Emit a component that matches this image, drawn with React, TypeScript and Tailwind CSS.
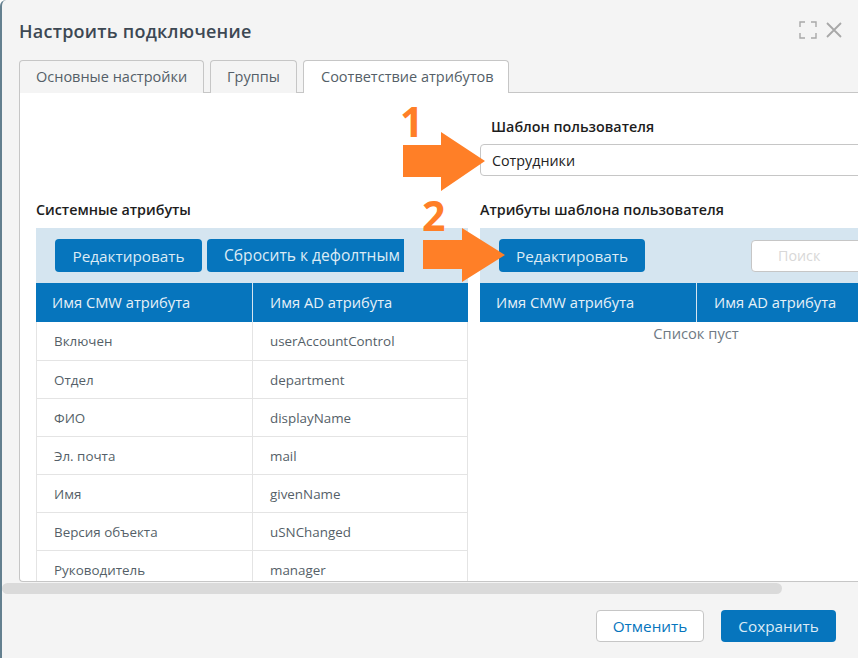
const rows = [
  ["Включен", "userAccountControl"],
  ["Отдел", "department"],
  ["ФИО", "displayName"],
  ["Эл. почта", "mail"],
  ["Имя", "givenName"],
  ["Версия объекта", "uSNChanged"],
  ["Руководитель", "manager"],
];

function HeaderRow() {
  return (
    <div className="flex h-[39px] bg-[#0675bd] text-[14.7px] text-[#e6f1f8]">
      <div className="w-[217px] border-r border-[#d5e5f0] pl-[16px] flex items-center pb-[1px]">Имя CMW атрибута</div>
      <div className="flex-1 pl-[17px] flex items-center pb-[1px]">Имя AD атрибута</div>
    </div>
  );
}

function Btn({ children, className }: { children: React.ReactNode; className: string }) {
  return (
    <div className={"h-[33px] bg-[#0675bd] text-[#dcebf5] text-[15.3px] pt-[1px] flex items-center shrink-0 overflow-hidden whitespace-nowrap " + className}>
      {children}
    </div>
  );
}

export default function App() {
  return (
    <div
      className="relative w-[858px] h-[658px] overflow-hidden bg-[#f4f4f4] border-l-2 border-[#64808f] rounded-tl-[6px] flex flex-col"
      style={{ fontFamily: '"Open Sans", "Noto Sans", sans-serif' }}
    >
      <div className="flex items-center justify-between h-[60px] pl-[17px] pr-[16px]">
        <div className="text-[18px] font-semibold text-[#3d4853] tracking-[0.25px] pt-[2px]">Настроить подключение</div>
        <div className="flex items-center gap-[9px] text-[#a8a8a8]">
          <svg width="18" height="18" viewBox="0 0 18 18" fill="none" stroke="currentColor" strokeWidth="1.4">
            <path d="M1 6V1h5M12 1h5v5M17 12v5h-5M6 17H1v-5" />
          </svg>
          <svg width="16" height="16" viewBox="0 0 16 16" fill="none" stroke="currentColor" strokeWidth="1.8">
            <path d="M1 1l14 14M15 1L1 15" />
          </svg>
        </div>
      </div>

      <div className="flex pl-[17px] gap-[6px] h-[33px] text-[14.5px] text-[#555f68] relative z-10">
        <div className="w-[185px] h-[33px] bg-[#f4f4f4] border border-b-0 border-[#c6c6c6] rounded-t-[4px] flex items-center pl-[16px] pb-[1px]">Основные настройки</div>
        <div className="w-[87px] h-[33px] bg-[#f4f4f4] border border-b-0 border-[#c6c6c6] rounded-t-[4px] flex items-center pl-[16px] pb-[1px]">Группы</div>
        <div className="w-[206px] h-[33px] bg-white border border-b-0 border-[#c6c6c6] rounded-t-[4px] flex items-center pl-[17px] pb-[1px]">Соответствие атрибутов</div>
      </div>

      <div className="ml-[17px] -mt-[1px] h-[490px] bg-white border border-r-0 border-[#c6c6c6] rounded-bl-[4px] overflow-hidden pl-[16px] shrink-0">
        <div className="w-[900px]">
          <div className="ml-[444px] pt-[23px]">
            <div className="pl-[11px] h-[28px] text-[14.3px] font-semibold text-[#1d1d1d]">Шаблон пользователя</div>
            <div className="h-[32px] w-[500px] bg-white border border-[#c6c6c6] rounded-[4px] pl-[11px] pt-[2px] flex items-center text-[14.3px] text-[#222]">Сотрудники</div>
          </div>
          <div className="flex gap-[12px] mt-[23px]">
            <div className="w-[432px] shrink-0">
              <div className="h-[29px] text-[14.3px] font-semibold text-[#1d1d1d] flex items-start leading-[22px]">Системные атрибуты</div>
              <div className="h-[55px] bg-[#d5e5f0] flex items-center pl-[19px] gap-[5px]">
                <Btn className="w-[147px] rounded-[4px] justify-center">Редактировать</Btn>
                <Btn className="w-[197px] rounded-l-[4px] pl-[17px] text-[15.6px]">Сбросить к дефолтным</Btn>
              </div>
              <HeaderRow />
              <div className="border-x border-[#e4e4e4] text-[13.4px] text-[#555f68]">
                {rows.map((r, i) => (
                  <div key={r[0]} className={"flex border-b border-[#e4e4e4] " + (i === 0 ? "h-[39px]" : "h-[38px]")}>
                    <div className="w-[216px] border-r border-[#e4e4e4] pl-[17px] pt-[1px] flex items-center">{r[0]}</div>
                    <div className="flex-1 pl-[17px] pt-[1px] flex items-center">{r[1]}</div>
                  </div>
                ))}
              </div>
            </div>
            <div className="w-[432px] shrink-0">
              <div className="h-[29px] text-[14.3px] font-semibold text-[#1d1d1d] flex items-start leading-[22px]">Атрибуты шаблона пользователя</div>
              <div className="h-[55px] bg-[#d5e5f0] flex items-center pl-[19px]">
                <Btn className="w-[146px] rounded-[4px] justify-center">Редактировать</Btn>
                <div className="ml-[106px] w-[140px] h-[32px] bg-white border border-[#c6c6c6] rounded-[4px] pl-[26px] pt-[1px] flex items-center text-[14.3px] text-[#d8d8d8] shrink-0">Поиск</div>
              </div>
              <HeaderRow />
              <div className="text-center text-[14.7px] text-[#6f7a84]">Список пуст</div>
            </div>
          </div>
        </div>
      </div>

      <div className="h-[12px] pt-[1px] shrink-0">
        <div className="w-[780px] h-[11px] rounded-full bg-[#dadada]" />
      </div>

      <div className="flex justify-end gap-[17px] pt-[16px] pr-[22px]">
        <div className="w-[108px] h-[32px] bg-white border border-[#c6c6c6] rounded-[4px] flex items-center justify-center text-[15.3px] text-[#0675bd]">Отменить</div>
        <div className="w-[115px] h-[32px] bg-[#0675bd] rounded-[4px] flex items-center justify-center text-[15.3px] text-[#dcebf5]">Сохранить</div>
      </div>

      <div className="absolute left-[398px] top-[96px] text-[41px] font-bold text-[#ff7f27] leading-[50px]">1</div>
      <div className="absolute left-[420px] top-[190px] text-[41px] font-bold text-[#ff7f27] leading-[50px]">2</div>
      <svg className="absolute left-[-2px] top-0" width="858" height="658" viewBox="0 0 858 658" fill="#ff7f27">
        <path d="M403 145H441V132L485 161L441 191V177H403Z" />
        <path d="M423 240H462V228L505 255L462 282V269H423Z" />
      </svg>
    </div>
  );
}
